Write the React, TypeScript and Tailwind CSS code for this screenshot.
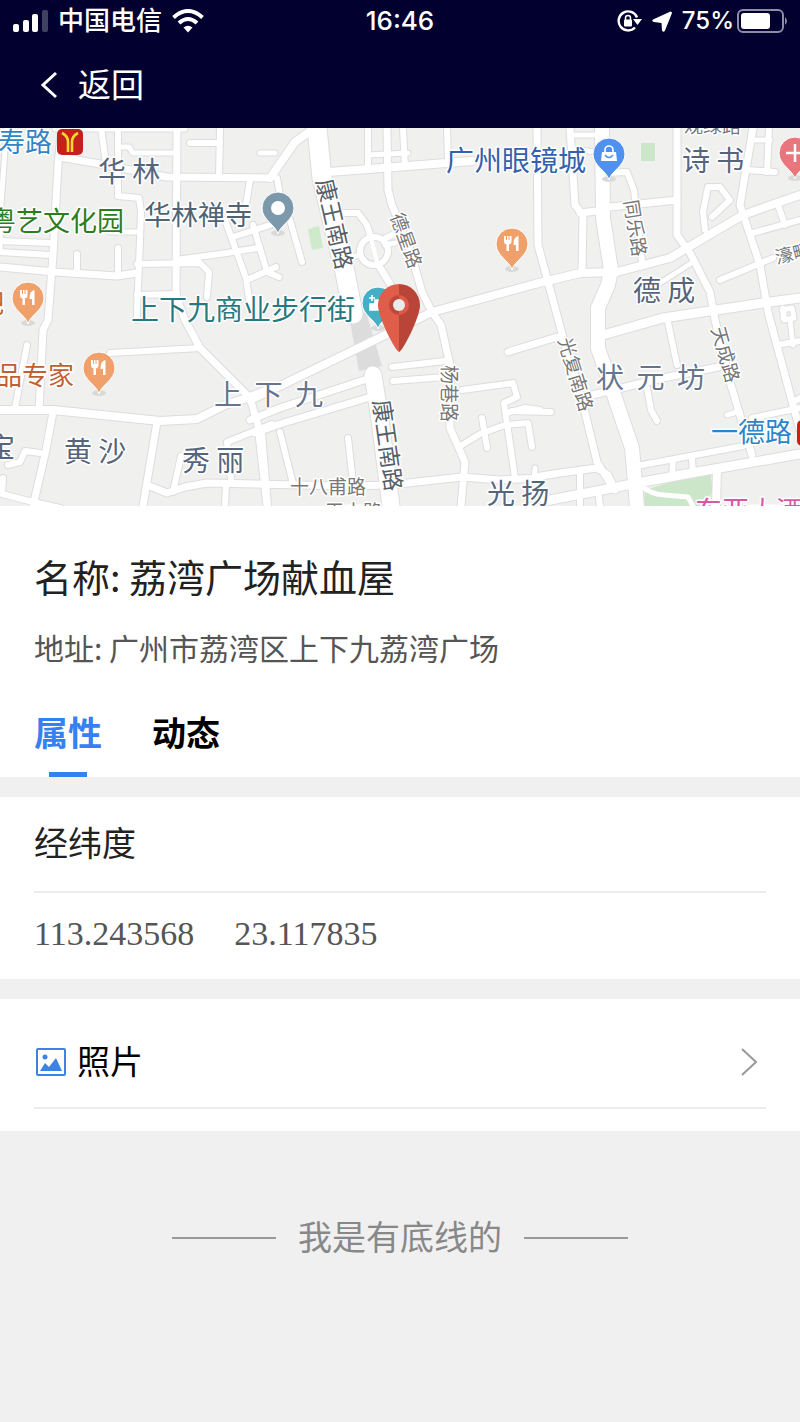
import { useState } from 'react';
import type { ReactNode } from 'react';

type Road = [width: number, points: string];

type PlaceLabel = {
  text: string;
  x: number;
  y: number;
  size: number;
  color: string;
  rotate?: number;
};

type PinProps = {
  x: number;
  y: number;
  color: string;
  children?: ReactNode;
};

const ROADS: Road[] = [
  // north west
  [5, '7,128 5,150 1,205 0,250'],
  [7, '62,128 58,165 53,255 48,320 43,330 39,410'],
  [5, '55,129 185,129'],
  [7, '60,157 100,164 167,177 270,178'],
  [6, '101,128 106,163'],
  [6, '118,128 118,196 139,198 141,212 139,265 137,310 137,320'],
  [5, '118,147 129,147 133,153 175,153'],
  [7, '177,128 176,296 185,320 200,348 250,398 258,425 267,506'],
  [6, '190,143 220,143'],
  [6, '220,128 219,177'],
  [5, '260,153 275,153'],
  [6, '250,180 246,205'],
  [5, '110,232 137,232'],
  [6, '0,241 50,243'],
  [6, '0,252 50,255'],
  [7, '0,267 55,272 117,276 137,273'],
  [6, '77,254 77,273'],
  [6, '118,248 118,275'],
  [6, '137,264 200,263 209,272 207,297'],
  [6, '176,260 227,253 257,248'],
  [6, '225,220 246,278 250,306'],
  [6, '253,225 267,272 279,277'],
  [6, '233,237 270,225'],
  [6, '247,280 276,267'],
  [6, '137,295 177,294'],
  [8, '270,178 295,142 312,130'],
  [6, '277,178 280,195 290,220 302,262'],
  // centre
  [8, '328,172 382,168 472,161'],
  [6, '368,128 368,170'],
  [7, '387,128 388,190 392,205 410,250 422,292 432,312'],
  [6, '403,128 405,167'],
  [5, '368,155 408,153'],
  [6, '447,128 448,163'],
  [6, '342,213 358,213 367,225 371,238'],
  [6, '386,238 402,230'],
  [5, '385,245 395,243'],
  [5, '348,258 360,255'],
  [7, '379,266 392,287 400,298'],
  [8, '250,400 282,385 385,335 432,312 535,284 580,273 617,272 670,258 743,215 800,195'],
  // north east
  [7, '537,128 538,245 557,315 565,345 582,400 597,462 613,488'],
  [7, '570,128 575,205 583,215 582,272'],
  [5, '572,135 600,135'],
  [5, '573,150 602,152'],
  [7, '580,213 605,210'],
  [7, '610,207 677,200'],
  [6, '607,173 627,172 634,190 642,262'],
  [7, '677,128 677,235 690,253 710,292 715,320 730,382 752,455'],
  [7, '753,128 740,205 760,265 768,312 793,405 800,430'],
  [5, '753,140 770,140'],
  [6, '769,128 767,172'],
  [6, '748,170 775,172'],
  [6, '705,230 703,212 708,187 720,187 730,200 712,217'],
  [6, '720,280 773,258'],
  [6, '753,233 800,220'],
  [6, '778,205 785,225'],
  [5, '657,285 693,262'],
  [9, '603,335 663,318 763,303 800,298'],
  [5, '782,310 792,308 794,318 784,320 784,310'],
  // south east
  [6, '668,322 677,365'],
  [7, '588,396 663,378 723,366'],
  [6, '647,388 651,410 657,421'],
  [7, '508,352 557,337'],
  [6, '512,411 551,412'],
  [5, '727,415 740,411'],
  [6, '637,466 743,446'],
  [9, '545,501 597,491 637,483 697,472 800,454'],
  [6, '673,460 672,478'],
  [6, '692,458 693,474'],
  [7, '535,477 560,473 597,468 608,475 615,490'],
  [6, '580,472 580,506'],
  [6, '598,490 600,506'],
  [8, '717,470 716,506'],
  [6, '777,345 800,341'],
  [5, '783,308 783,318 790,320 793,345'],
  [6, '752,418 800,408'],
  [6, '793,402 800,398'],
  // south west
  [6, '27,345 15,408'],
  [8, '0,410 53,410 160,421 197,419 225,405 250,397 270,389'],
  [7, '53,412 46,450 33,506'],
  [7, '157,422 143,506'],
  [6, '110,353 200,348'],
  [6, '8,465 20,462 25,451 40,453'],
  [6, '3,478 2,494 33,502 60,508'],
  [7, '147,485 167,493 185,487 207,483 345,486 390,485 462,477 500,480 540,478'],
  [6, '181,456 173,492'],
  [6, '231,480 227,442 257,430 272,424'],
  [6, '226,485 225,506'],
  [7, '250,420 280,408 364,380'],
  [7, '255,433 280,424 367,398'],
  [6, '280,432 293,484'],
  [6, '348,438 353,482'],
  [6, '262,432 268,506'],
  // south centre
  [7, '432,312 441,325 450,365 450,428 465,462 461,506'],
  [6, '392,367 445,361'],
  [6, '393,381 445,377'],
  [6, '462,390 513,383 517,397 504,403 515,478'],
  [6, '462,445 480,434 505,425 528,423 532,447'],
  [6, '482,418 487,448'],
  [6, '507,413 525,408 540,410'],
  [5, '535,468 534,480'],
  // main roads
  [19, '317,128 322,178 345,272 353,314'],
  [17, '373,375 380,420 391,506'],
  [14, '602,128 603,218 611,270 608,285 598,308 598,348 613,392 632,448 637,506'],
];

const LABELS: PlaceLabel[] = [
  { text: '寿路', x: -2, y: 152, size: 27, color: '#3385c6' },
  { text: '华 林', x: 98, y: 182, size: 28, color: '#56657c' },
  { text: '粤艺文化园', x: -11, y: 231, size: 27, color: '#2d7d1e' },
  { text: '华林禅寺', x: 144, y: 225, size: 27, color: '#4f6373' },
  { text: '广州眼镜城', x: 446, y: 171, size: 28, color: '#3461ac' },
  { text: '诗 书', x: 682, y: 171, size: 28, color: '#56657c' },
  { text: '观绿路', x: 684, y: 133, size: 19, color: '#777777' },
  { text: '德 成', x: 633, y: 301, size: 28, color: '#56657c' },
  { text: '上下九商业步行街', x: 131, y: 320, size: 28, color: '#247a80' },
  { text: '吧', x: -22, y: 313, size: 26, color: '#bf5f33' },
  { text: '品专家', x: -4, y: 385, size: 26, color: '#bf5f33' },
  { text: '上  下  九', x: 214, y: 405, size: 28, color: '#66748d' },
  { text: '状  元  坊', x: 596, y: 388, size: 28, color: '#66748d' },
  { text: '宝', x: -13, y: 458, size: 28, color: '#56657c' },
  { text: '黄 沙', x: 64, y: 462, size: 28, color: '#56657c' },
  { text: '秀 丽', x: 182, y: 471, size: 28, color: '#56657c' },
  { text: '光 扬', x: 487, y: 504, size: 28, color: '#56657c' },
  { text: '十八甫路', x: 290, y: 494, size: 19, color: '#777777' },
  { text: '平中路', x: 325, y: 519, size: 19, color: '#777777' },
  { text: '一德路', x: 711, y: 442, size: 27, color: '#2a86c8' },
  { text: '东亚大酒店', x: 695, y: 521, size: 27, color: '#d55aa6' },
  { text: '康王南路', x: 316, y: 181, size: 23, color: '#56606a', rotate: 77 },
  { text: '康王南路', x: 373, y: 401, size: 23, color: '#56606a', rotate: 82 },
  { text: '德星路', x: 390, y: 216, size: 19, color: '#777777', rotate: 70 },
  { text: '同乐路', x: 624, y: 201, size: 19, color: '#777777', rotate: 81 },
  { text: '杨巷路', x: 442, y: 365, size: 19, color: '#777777', rotate: 90 },
  { text: '光复南路', x: 558, y: 340, size: 19, color: '#777777', rotate: 73 },
  { text: '天成路', x: 711, y: 329, size: 19, color: '#777777', rotate: 74 },
  { text: '濠畔', x: 777, y: 264, size: 18, color: '#777777', rotate: -14 },
];

const Pin = ({ x, y, color, children }: PinProps) => (
  <g transform={`translate(${x} ${y})`}>
    <ellipse cx="0" cy="25" rx="7" ry="3" fill="#d9d9d9" />
    <path
      d="M0 26C-2 17-16 12-16 0A16 16 0 1 1 16 0C16 12 2 17 0 26Z"
      fill={color}
      stroke="#ffffff"
      strokeWidth="1"
    />
    {children}
  </g>
);

const Cutlery = () => (
  <g fill="#ffffff">
    <path d="M-8-8H-6V-4H-5V-8H-3.500V-4H-2.500V-8H-0.500V-3Q-0.500 0-3 0.500V7H-5.500V0.500Q-8 0-8-3Z" />
    <path d="M6.500-8V7H4V1H1.500Q1-7 6.500-8Z" />
  </g>
);

const MetroBadge = ({ x, y }: { x: number; y: number }) => (
  <g transform={`translate(${x} ${y})`}>
    <rect width="26" height="26" rx="5" fill="#c6201c" />
    <path
      d="M5 4Q11 7 11 13V23M21 4Q15 7 15 13V23"
      fill="none"
      stroke="#f7d92e"
      strokeWidth="2.600"
    />
  </g>
);

const StreetMap = () => (
  <svg
    viewBox="0 128 800 378"
    className="block w-full bg-[#f0f0ef] font-['Noto_Sans_CJK_SC',sans-serif]"
    role="img"
    aria-label="地图"
  >
    <path d="M643 506L645 490L710 470L713 492L700 506Z" fill="#cbe6c8" />
    <path d="M641 143H655V161H641Z" fill="#cbe6c8" />
    <path d="M308 229L319 226L323 248L312 250Z" fill="#cfeaca" />
    <path d="M349 316L366 312L382 366L359 371Z" fill="#dcdcdd" />

    {/* all the outlines go first so the junctions stay open */}
    <g fill="none" strokeLinecap="round" strokeLinejoin="round">
      <g stroke="#dddddf">
        {ROADS.map(([width, points]) => (
          <polyline key={points} points={points} strokeWidth={width + 2} />
        ))}
        <circle cx="374" cy="251" r="14" strokeWidth="8" />
      </g>
      <g stroke="#ffffff">
        {ROADS.map(([width, points]) => (
          <polyline key={points} points={points} strokeWidth={width} />
        ))}
        <circle cx="374" cy="251" r="14" strokeWidth="6" />
        <path d="M371 238L378 266" strokeWidth="4" />
        <path d="M642 486Q650 494 664 495L688 497L694 508" strokeWidth="5" />
      </g>
    </g>

    {LABELS.map(({ text, x, y, size, color, rotate = 0 }) => (
      <text
        key={`${text}-${x}`}
        transform={`translate(${x} ${y}) rotate(${rotate})`}
        fontSize={size}
        fill={color}
        stroke="#ffffff"
        strokeWidth="3"
        strokeLinejoin="round"
        paintOrder="stroke"
        className="whitespace-pre"
      >
        {text}
      </text>
    ))}

    <MetroBadge x={57} y={129} />
    <MetroBadge x={797} y={420} />

    <Pin x={278} y={208} color="#7b99ab">
      <circle r="7" fill="#ffffff" />
    </Pin>
    <Pin x={512} y={244} color="#f0a06a">
      <Cutlery />
    </Pin>
    <Pin x={28} y={298} color="#f0a06a">
      <Cutlery />
    </Pin>
    <Pin x={99} y={368} color="#f0a06a">
      <Cutlery />
    </Pin>
    <Pin x={609} y={154} color="#5090ee">
      <path d="M-7-2H7L8 7H-8Z" fill="#ffffff" />
      <path d="M-4-2V-4A4 4 0 0 1 4-4V-2" fill="none" stroke="#ffffff" strokeWidth="1.600" />
      <path d="M-4 1Q0 6 4 1" fill="none" stroke="#5090ee" strokeWidth="1.600" />
    </Pin>
    <Pin x={795} y={153} color="#e9767c">
      <path d="M-9 0H9M0-9V9" stroke="#ffffff" strokeWidth="2.500" />
    </Pin>
    <Pin x={378} y={303} color="#45b0c3">
      <path d="M-9-5H-3M-6-8V-2M-8 7V1H-3V-3H8V7Z" fill="#ffffff" stroke="#ffffff" strokeWidth="1.600" />
    </Pin>

    <path d="M399 352C396 352 378 318 378 305A21 21 0 0 1 399 284Z" fill="#e05d4a" />
    <path d="M399 352C402 352 420 318 420 305A21 21 0 0 0 399 284Z" fill="#b94539" />
    <path d="M399 295A10 10 0 0 0 399 315Z" fill="#bd483b" />
    <path d="M399 295A10 10 0 0 1 399 315Z" fill="#dd5a48" />
    <circle cx="399" cy="305" r="6" fill="#e9eaea" />
  </svg>
);

const StatusBar = () => (
  <div className="grid h-[42px] grid-cols-3 items-center px-3 font-['Inter','Noto_Sans_CJK_SC',sans-serif] text-[24px] leading-[30px] font-medium">
    <div className="flex items-center gap-[10px]">
      <svg width="36" height="24" viewBox="0 0 36 24" fill="#ffffff" aria-hidden="true">
        <rect x="1" y="15" width="6" height="8" rx="2" />
        <rect x="11" y="11" width="6" height="12" rx="2" />
        <rect x="20" y="5" width="6" height="18" rx="2" />
        <rect x="30" y="1" width="6" height="22" rx="2" opacity="0.250" />
      </svg>
      <span className="text-[26px] whitespace-nowrap">中国电信</span>
      <svg width="32" height="24" viewBox="0 0 32 24" fill="none" stroke="#ffffff" aria-hidden="true">
        <path d="M1.500 8.500Q16-4.500 30.500 8.500" strokeWidth="4" />
        <path d="M7 14Q16 6 25 14" strokeWidth="4" />
        <path d="M16 23.500L11.500 18.500Q16 15 20.500 18.500Z" fill="#ffffff" stroke="none" />
      </svg>
    </div>
    <time className="text-center text-[26px]">16:46</time>
    <div className="flex items-center justify-end gap-[6px]">
      <svg width="25" height="24" viewBox="0 0 25 24" fill="none" aria-hidden="true">
        <path d="M18 18.500A9.500 9.500 0 1 1 20 8.500" stroke="#ffffff" strokeWidth="2.400" />
        <path d="M16 10H25L20.500 16Z" fill="#ffffff" />
        <rect x="7" y="10.500" width="8" height="7" rx="1" fill="#ffffff" />
        <path d="M8.500 11V9A2.500 2.500 0 0 1 13.500 9V11" stroke="#ffffff" strokeWidth="1.500" />
      </svg>
      <svg width="28" height="24" viewBox="0 0 28 24" fill="#ffffff" aria-hidden="true">
        <path d="M22.500 2.500Q24 2.500 24 4L17 21.500Q15.500 24 14 21.500L13.500 14L6 13Q3 12 5 10.500Z" />
      </svg>
      <div className="flex items-center gap-[2px]">
        <span>75%</span>
        <svg width="52" height="24" viewBox="0 0 52 24" aria-hidden="true">
          <rect x="2" y="1" width="45" height="22" rx="5" fill="none" stroke="#8d8da6" strokeWidth="2" />
          <rect x="5" y="4" width="29" height="16" rx="3" fill="#ffffff" />
          <path d="M49 8Q53 12 49 16Z" fill="#8d8da6" />
        </svg>
      </div>
    </div>
  </div>
);

const TABS = ['属性', '动态'];

export default function App() {
  const [activeTab, setActiveTab] = useState(TABS[0]);

  return (
    <div className="min-h-screen w-full bg-[#f0f0f0] font-['Noto_Sans_CJK_SC',sans-serif] text-black">
      <header className="bg-[#02002f] text-white">
        <StatusBar />
        <div className="px-10 pt-5 pb-5">
          <button type="button" className="flex items-center gap-5 text-[33px] leading-[42px]">
            <svg width="18" height="28" viewBox="0 0 18 28" fill="none" stroke="#ffffff" strokeWidth="3" aria-hidden="true">
              <path d="M16 2L3 14L16 26" />
            </svg>
            <span className="pb-1">返回</span>
          </button>
        </div>
      </header>

      <main>
        <StreetMap />

        <section className="bg-white px-[34px] pt-11">
          <h1 className="text-[38px] leading-[52px] text-[#222222]">名称: 荔湾广场献血屋</h1>
          <p className="mt-6 text-[30px] leading-[42px] text-[#555555]">地址: 广州市荔湾区上下九荔湾广场</p>
          <div role="tablist" className="mt-10 flex gap-[50px]">
            {TABS.map((tab) => (
              <button
                key={tab}
                type="button"
                role="tab"
                aria-selected={tab === activeTab}
                onClick={() => setActiveTab(tab)}
                className={
                  tab === activeTab
                    ? 'flex flex-col items-center gap-4 text-[34px] leading-[48px] font-bold text-[#3681f2]'
                    : 'flex flex-col items-center gap-4 text-[34px] leading-[48px] font-bold text-black'
                }
              >
                {tab}
                {tab === activeTab && <span className="h-[5px] w-[38px] bg-[#3681f2]" />}
              </button>
            ))}
          </div>
        </section>

        <section className="mt-5 bg-white px-[34px]">
          <h2 className="border-b-2 border-[#ececec] pt-5 pb-6 text-[34px] leading-[50px] text-[#222222]">经纬度</h2>
          <p className="flex gap-10 pt-[18px] pb-[22px] font-['Liberation_Serif',serif] text-[34px] leading-[46px] text-[#555555]">
            <span>113.243568</span>
            <span>23.117835</span>
          </p>
        </section>

        <section className="mt-5 bg-white px-[34px] pb-[22px]">
          <a href="#photos" className="flex items-center border-b-2 border-[#ececec] pt-[38px] pb-5 text-[33px] leading-[46px]">
            <svg width="32" height="28" viewBox="0 0 32 28" className="mr-[11px]" aria-hidden="true">
              <rect x="3" y="1" width="28" height="26" rx="1" fill="none" stroke="#3c83e6" strokeWidth="2" />
              <circle cx="11" cy="9" r="2.500" fill="#3c83e6" />
              <path d="M6 23L11 15L15 19L22 10L28 23Z" fill="#3c83e6" />
            </svg>
            <span className="pb-1">照片</span>
            <svg width="18" height="30" viewBox="0 0 18 30" fill="none" stroke="#999999" strokeWidth="2" className="mr-2 ml-auto" aria-hidden="true">
              <path d="M2 2L16 15L2 28" />
            </svg>
          </a>
        </section>
      </main>

      <footer className="flex items-center justify-center gap-[22px] pt-[82px] pb-10 text-[34px] leading-[46px] text-[#888888]">
        <span className="h-[2px] w-[104px] bg-[#999999]" />
        <span className="pb-1">我是有底线的</span>
        <span className="h-[2px] w-[104px] bg-[#999999]" />
      </footer>
    </div>
  );
}
